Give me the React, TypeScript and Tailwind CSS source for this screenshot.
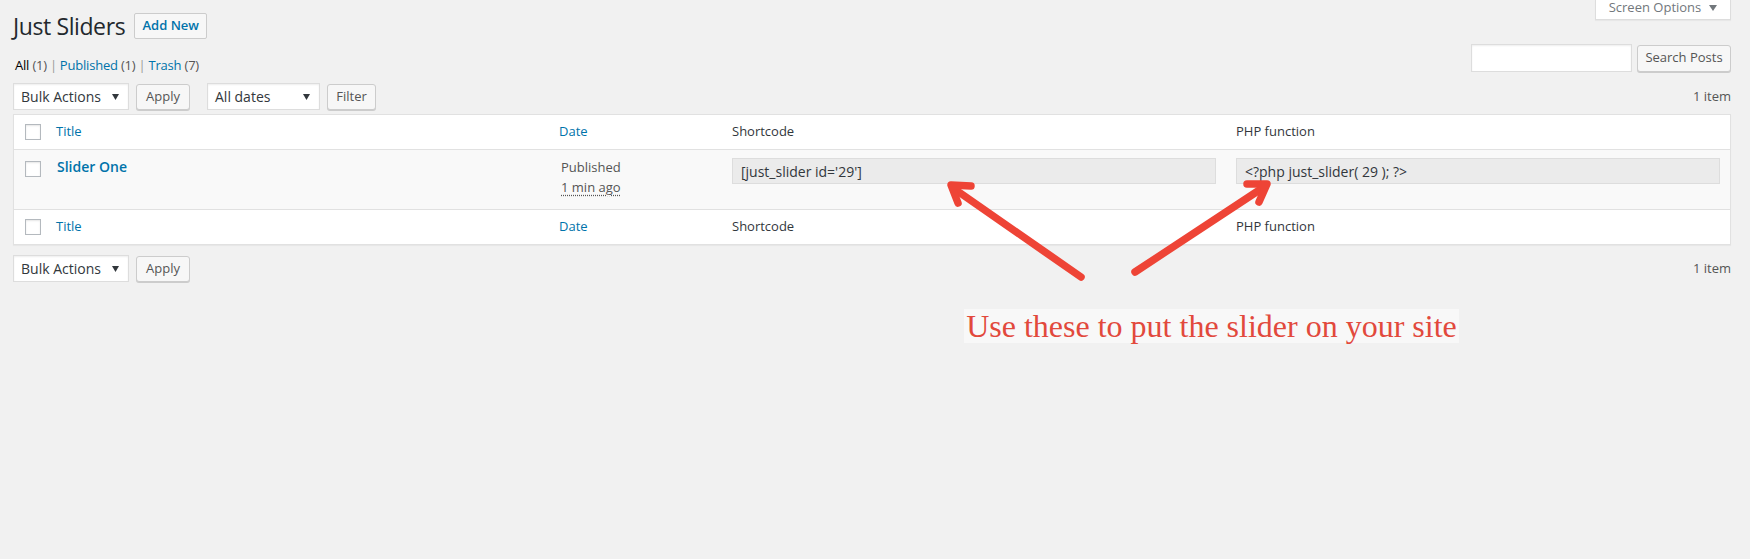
import React from "react";

const Tri = () => (
  <svg width="7" height="6" viewBox="0 0 7 6" className="shrink-0">
    <path d="M0 0 L7 0 L3.5 6 Z" fill="#32373c" />
  </svg>
);

const Select = ({ label, w }: { label: string; w: string }) => (
  <div
    className={`${w} h-[27px] bg-white border border-[#ddd] shadow-[inset_0_1px_2px_rgba(0,0,0,0.07)] flex items-center justify-between pl-[7px] pr-[9px] text-[14px] text-[#32373c]`}
  >
    <span>{label}</span>
    <Tri />
  </div>
);

const Btn = ({ label, w }: { label: string; w: string }) => (
  <div
    className={`${w} h-[26px] bg-[#f7f7f7] border border-[#ccc] rounded-[3px] shadow-[0_1px_0_#ccc] flex items-center justify-center text-[13px] text-[#555]`}
  >
    {label}
  </div>
);

const Cb = () => <div className="w-[16px] h-[16px] bg-white border border-[#b4b9be] shadow-[inset_0_1px_2px_rgba(0,0,0,0.1)]" />;

const HeadRow = ({ border }: { border: "b" | "t" }) => (
  <div
    className={`grid grid-cols-[32px_503px_173px_504px_504px] h-[35px] items-center text-[13px] bg-white ${
      border === "b" ? "border-b border-[#e1e1e1]" : "border-t border-[#e1e1e1]"
    }`}
  >
    <div className="pl-[11px] flex items-center">
      <Cb />
    </div>
    <div className="pl-[10px] text-[#0073aa]">Title</div>
    <div className="pl-[10px] text-[#0073aa]">Date</div>
    <div className="pl-[10px] text-[#32373c]">Shortcode</div>
    <div className="pl-[10px] text-[#32373c]">PHP function</div>
  </div>
);

export default function App() {
  return (
    <div className="relative w-[1750px] min-h-[559px] bg-[#f1f1f1] font-['Open_Sans',sans-serif] text-[13px] text-[#444] pl-[13px] pr-[19px]">
      {/* Top row */}
      <div className="flex justify-between items-start">
        <div className="pt-[13px] flex items-center">
          <h1 className="text-[23px] leading-[26px] text-[#23282d] tracking-[-0.4px]">Just Sliders</h1>
          <div className="ml-[9px] h-[26px] w-[73px] bg-[#f7f7f7] border border-[#ccc] rounded-[2px] flex items-center justify-center text-[13px] font-semibold text-[#0073aa]">
            Add New
          </div>
        </div>
        <div className="w-[136px] h-[20px] bg-white border border-t-0 border-[#ddd] shadow-[0_1px_1px_rgba(0,0,0,0.04)] flex items-start justify-center gap-[8px] text-[13px] leading-[15px] text-[#72777c]">
          <span>Screen Options</span>
          <svg width="8" height="6" viewBox="0 0 8 6" className="mt-[5px]">
            <path d="M0 0 L8 0 L4 6 Z" fill="#72777c" />
          </svg>
        </div>
      </div>

      {/* Subsubsub + search */}
      <div className="mt-[5px] flex justify-between items-start">
        <div className="pt-[12px] pl-[2px] text-[13px] leading-[18px] text-[#555] tracking-[-0.2px]">
          <span className="text-black">All</span> <span>(1)</span>
          <span className="mx-[3px] text-[#999]">|</span>
          <span className="text-[#0073aa]">Published</span> <span>(1)</span>
          <span className="mx-[3px] text-[#999]">|</span>
          <span className="text-[#0073aa]">Trash</span> <span>(7)</span>
        </div>
        <div className="flex items-center gap-[5px]">
          <div className="w-[161px] h-[28px] bg-white border border-[#ddd] shadow-[inset_0_1px_2px_rgba(0,0,0,0.07)]" />
          <div className="w-[94px] h-[27px] bg-[#f7f7f7] border border-[#ccc] rounded-[3px] shadow-[0_1px_0_#ccc] flex items-center justify-center text-[13px] text-[#555]">
            Search Posts
          </div>
        </div>
      </div>

      {/* Top tablenav */}
      <div className="mt-[9px] flex items-center justify-between">
        <div className="flex items-center">
          <Select label="Bulk Actions" w="w-[116px]" />
          <div className="ml-[7px]">
            <Btn label="Apply" w="w-[54px]" />
          </div>
          <div className="ml-[17px]">
            <Select label="All dates" w="w-[113px]" />
          </div>
          <div className="ml-[7px]">
            <Btn label="Filter" w="w-[49px]" />
          </div>
        </div>
        <div className="text-[13px] text-[#555]">1 item</div>
      </div>

      {/* Table */}
      <div className="mt-[4px] border border-[#e1e1e1] shadow-[0_1px_1px_rgba(0,0,0,0.04)] bg-white">
        <HeadRow border="b" />
        <div className="grid grid-cols-[32px_503px_173px_504px_504px] h-[59px] bg-[#f9f9f9] text-[13px]">
          <div className="pl-[11px] pt-[11px]">
            <Cb />
          </div>
          <div className="pl-[11px] pt-[7px] text-[14px] font-semibold text-[#0073aa] leading-[20px]">Slider One</div>
          <div className="pl-[12px] pt-[7px] text-[13px] text-[#555] leading-[20px]">
            <div>Published</div>
            <div className="underline decoration-dotted underline-offset-[3px]">1 min ago</div>
          </div>
          <div className="px-[10px] pt-[8px]">
            <div className="h-[26px] bg-[#ebebeb] border border-[#ddd] flex items-center pl-[8px] text-[14px] text-[#32373c]">
              [just_slider id='29']
            </div>
          </div>
          <div className="px-[10px] pt-[8px]">
            <div className="h-[26px] bg-[#ebebeb] border border-[#ddd] flex items-center pl-[8px] text-[14px] text-[#32373c]">
              {"<?php just_slider( 29 ); ?>"}
            </div>
          </div>
        </div>
        <HeadRow border="t" />
      </div>

      {/* Bottom tablenav */}
      <div className="mt-[10px] flex items-center justify-between">
        <div className="flex items-center">
          <Select label="Bulk Actions" w="w-[116px]" />
          <div className="ml-[7px]">
            <Btn label="Apply" w="w-[54px]" />
          </div>
        </div>
        <div className="text-[13px] text-[#555]">1 item</div>
      </div>

      {/* Annotation overlay */}
      <svg className="absolute left-0 top-0 pointer-events-none" width="1750" height="559">
        <g stroke="#ee4436" strokeWidth="7.5" strokeLinecap="round" strokeLinejoin="round" fill="none">
          <line x1="1081" y1="277" x2="953" y2="188" />
          <polyline points="971,186 951,185 958,203" />
          <line x1="1135" y1="272" x2="1264" y2="187" />
          <polyline points="1247,184 1267,184 1259,202" />
        </g>
      </svg>
      <div className="absolute left-[964px] top-[309px] w-[495px] h-[34px] bg-[#f8f8f8] flex items-center justify-center font-['Liberation_Serif',serif] text-[32px] leading-[34px] text-[#e2493c]">
        Use these to put the slider on your site
      </div>
    </div>
  );
}
